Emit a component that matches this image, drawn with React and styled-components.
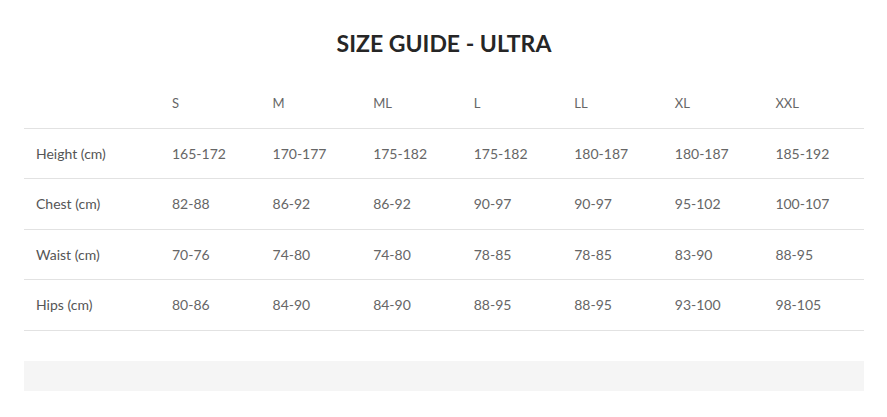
import React from 'react';
import styled, { createGlobalStyle } from 'styled-components';

const GlobalStyle = createGlobalStyle`
    body{
        margin: 0;
        background: #fff;
        font-family: Lato, "Open Sans", sans-serif;
    }
`;

const Wrapper = styled.div`
    padding: 28px 23px 0 24px;
`;

const Title = styled.h2`
    margin: 0 0 20px;
    text-align: center;
    font-size: 23px;
    line-height: 30px;
    font-weight: 700;
    color: #262626;
`;

const Table = styled.table`
    width: 840px;
    border-collapse: collapse;
    table-layout: fixed;
`;

const HeadCell = styled.th`
    height: 49.5px;
    padding: 0 12px;
    text-align: left;
    font-size: 13px;
    font-weight: 400;
    color: #666;
    border-bottom: 1px solid #e2e2e2;
    width: ${p => (p.$first ? '112px' : 'auto')};
`;

const Cell = styled.td`
    height: 49.5px;
    padding: 0 12px;
    font-size: 14px;
    color: ${p => (p.$label ? '#555' : '#666')};
    border-bottom: 1px solid #e2e2e2;
    white-space: nowrap;
`;

const Footer = styled.div`
    margin-top: 30px;
    width: 840px;
    height: 30px;
    background: #f5f5f5;
`;

const sizes = ['S', 'M', 'ML', 'L', 'LL', 'XL', 'XXL'];

const rows = [
    { label: 'Height (cm)', values: ['165-172', '170-177', '175-182', '175-182', '180-187', '180-187', '185-192'] },
    { label: 'Chest (cm)', values: ['82-88', '86-92', '86-92', '90-97', '90-97', '95-102', '100-107'] },
    { label: 'Waist (cm)', values: ['70-76', '74-80', '74-80', '78-85', '78-85', '83-90', '88-95'] },
    { label: 'Hips (cm)', values: ['80-86', '84-90', '84-90', '88-95', '88-95', '93-100', '98-105'] },
];

export default function App() {
    return (
        <>
            <GlobalStyle />
            <Wrapper>
                <Title>SIZE GUIDE - ULTRA</Title>
                <Table>
                    <thead>
                        <tr>
                            <HeadCell $first />
                            {sizes.map(s => (
                                <HeadCell key={s}>{s}</HeadCell>
                            ))}
                        </tr>
                    </thead>
                    <tbody>
                        {rows.map(r => (
                            <tr key={r.label}>
                                <Cell $label>{r.label}</Cell>
                                {r.values.map((v, i) => (
                                    <Cell key={i}>{v}</Cell>
                                ))}
                            </tr>
                        ))}
                    </tbody>
                </Table>
                <Footer />
            </Wrapper>
        </>
    );
}
